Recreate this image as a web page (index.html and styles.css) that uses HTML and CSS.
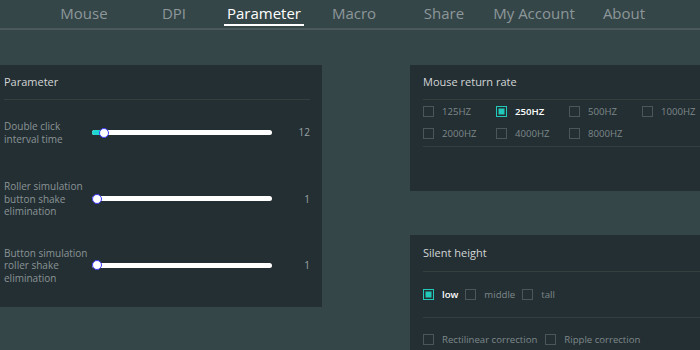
FILE: index.html
```html
<!DOCTYPE html>
<html>
<head>
<meta charset="utf-8">
<link rel="stylesheet" href="styles.css">
</head>
<body>
<nav class="nav">
  <a class="nav-item">Mouse</a>
  <a class="nav-item">DPI</a>
  <a class="nav-item active"><span>Parameter</span></a>
  <a class="nav-item">Macro</a>
  <a class="nav-item">Share</a>
  <a class="nav-item">My Account</a>
  <a class="nav-item">About</a>
</nav>
<main class="main">
  <section class="panel left">
    <h2 class="panel-title">Parameter</h2>
    <div class="rule"></div>
    <div class="row r1">
      <div class="label">Double click<br>interval time</div>
      <div class="slider"><div class="fill" style="width:12px"></div><div class="thumb" style="left:12px"></div></div>
      <div class="value">12</div>
    </div>
    <div class="row r2">
      <div class="label">Roller simulation<br>button shake<br>elimination</div>
      <div class="slider"><div class="thumb" style="left:5px"></div></div>
      <div class="value">1</div>
    </div>
    <div class="row r3">
      <div class="label">Button simulation<br>roller shake<br>elimination</div>
      <div class="slider"><div class="thumb" style="left:5px"></div></div>
      <div class="value">1</div>
    </div>
  </section>
  <div class="right">
    <section class="panel rate">
      <h2 class="panel-title">Mouse return rate</h2>
      <div class="rule"></div>
      <div class="grid">
        <label class="opt"><span class="box"></span>125HZ</label>
        <label class="opt on"><span class="box"></span>250HZ</label>
        <label class="opt"><span class="box"></span>500HZ</label>
        <label class="opt"><span class="box"></span>1000HZ</label>
        <label class="opt"><span class="box"></span>2000HZ</label>
        <label class="opt"><span class="box"></span>4000HZ</label>
        <label class="opt"><span class="box"></span>8000HZ</label>
      </div>
      <div class="rule"></div>
    </section>
    <section class="panel silent">
      <h2 class="panel-title">Silent height</h2>
      <div class="rule"></div>
      <div class="inline">
        <label class="opt on"><span class="box"></span>low</label>
        <label class="opt"><span class="box"></span>middle</label>
        <label class="opt"><span class="box"></span>tall</label>
      </div>
      <div class="rule"></div>
      <div class="inline wide">
        <label class="opt"><span class="box"></span>Rectilinear correction</label>
        <label class="opt"><span class="box"></span>Ripple correction</label>
      </div>
    </section>
  </div>
</main>
</body>
</html>
```
FILE: styles.css
```css
* { box-sizing: border-box; }
html, body { margin: 0; padding: 0; }
body {
  width: 700px;
  height: 350px;
  overflow: hidden;
  background: #354649;
  font-family: "Open Sans", "Noto Sans", sans-serif;
  color: #8a9496;
}
.nav {
  display: flex;
  height: 30px;
  padding-left: 39px;
  border-bottom: 2px solid #4b595c;
}
.nav-item {
  width: 90px;
  text-align: center;
  font-size: 15px;
  line-height: 27px;
  color: #8d9799;
}
.nav-item.active { color: #ffffff; }
.nav-item.active span {
  display: inline-block;
  width: 80px;
  line-height: 21px;
  margin-top: 2px;
  border-bottom: 2px solid #ffffff;
}
.main {
  display: grid;
  grid-template-columns: 322px 290px;
  column-gap: 88px;
  padding-top: 35px;
}
.panel {
  background: #242f33;
}
.panel-title {
  margin: 0;
  font-size: 11px;
  font-weight: 400;
  color: #d2d6d7;
  line-height: 34px;
}
.rule {
  height: 1px;
  background: #33403f;
}
.left {
  height: 242px;
  padding: 0 12px 0 4px;
}
.row {
  display: grid;
  grid-template-columns: 88px 180px 1fr;
  align-items: center;
  font-size: 10px;
  line-height: 12.5px;
}
.r1 { margin-top: 20px; }
.r2 { margin-top: 35px; }
.r3 { margin-top: 29px; }
.label { color: #8a9496; }
.slider {
  position: relative;
  height: 5px;
  background: #ffffff;
  border-radius: 3px;
}
.fill {
  position: absolute;
  left: 0; top: 0; bottom: 0;
  background: #1fd6d0;
  border-radius: 3px 0 0 3px;
}
.thumb {
  position: absolute;
  top: 50%;
  width: 10px;
  height: 10px;
  margin: -5px 0 0 -5px;
  border-radius: 50%;
  background: #ffffff;
  border: 1px solid #3a3aff;
}
.value {
  text-align: right;
  color: #9aa3a5;
}
.right {
  display: flex;
  flex-direction: column;
  gap: 44px;
}
.rate {
  height: 126px;
  padding-left: 13px;
}
.silent {
  height: 120px;
  padding-left: 13px;
}
.panel.silent .panel-title { line-height: 36px; }
.grid {
  display: grid;
  grid-template-columns: repeat(4, 73px);
  row-gap: 11px;
  padding: 6px 0 7px;
}
.opt {
  display: flex;
  align-items: center;
  font-size: 9.6px;
  line-height: 11px;
  color: #7e888a;
  white-space: nowrap;
}
.box {
  width: 11px;
  height: 11px;
  border: 1px solid #4a5659;
  margin-right: 8px;
  flex: none;
}
.opt.on { color: #ffffff; font-weight: 600; }
.opt.on .box {
  border-color: #20c9b9;
  background: #20c9b9;
  box-shadow: inset 0 0 0 1.5px #242f33;
}
.inline {
  display: flex;
  gap: 7px;
  padding: 17px 0 17px;
}
.inline.wide { gap: 8px; padding-top: 16px; }
```
